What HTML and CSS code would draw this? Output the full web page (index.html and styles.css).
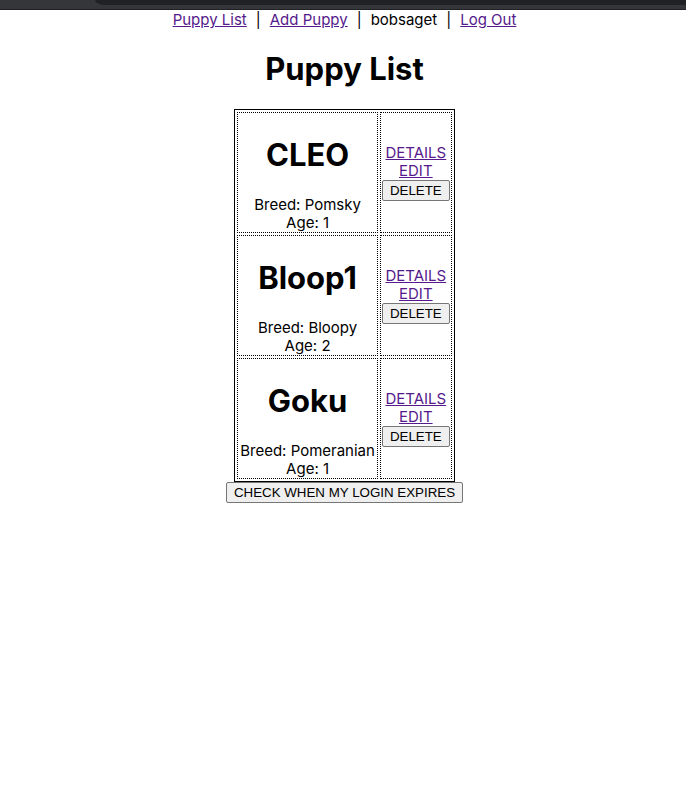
FILE: index.html
```html
<!DOCTYPE html>
<html lang="en">
<head>
<meta charset="utf-8">
<title>Puppy List</title>
<link rel="stylesheet" href="styles.css">
</head>
<body>
<div class="window-edge"><div class="window-field"></div></div>
<nav class="nav">
<a href="#list">Puppy List</a><span>|</span><a href="#add">Add Puppy</a><span>|</span><span>bobsaget</span><span>|</span><a href="#logout">Log Out</a>
</nav>
<main class="page">
<h1>Puppy List</h1>
<table class="puppies" id="list">
<tbody>
<tr>
<td class="puppy"><h1>CLEO</h1>Breed: Pomsky<br>Age: 1</td>
<td><a href="#cleo">DETAILS</a><br><a href="#edit-cleo">EDIT</a><br><button type="button">DELETE</button></td>
</tr>
<tr>
<td class="puppy"><h1>Bloop1</h1>Breed: Bloopy<br>Age: 2</td>
<td><a href="#bloop1">DETAILS</a><br><a href="#edit-bloop1">EDIT</a><br><button type="button">DELETE</button></td>
</tr>
<tr>
<td class="puppy"><h1>Goku</h1>Breed: Pomeranian<br>Age: 1</td>
<td><a href="#goku">DETAILS</a><br><a href="#edit-goku">EDIT</a><br><button type="button">DELETE</button></td>
</tr>
</tbody>
</table>
<button type="button">CHECK WHEN MY LOGIN EXPIRES</button>
</main>
</body>
</html>
```

FILE: styles.css
```css
body {
  margin: 0;
  background: #fff;
  color: #000;
  font-family: Inter, sans-serif;
  font-size: 15px;
  line-height: 18px;
  text-align: center;
}

a {
  color: #551a8b;
}

.window-edge {
  box-sizing: border-box;
  height: 10px;
  padding-left: 95px;
  border-bottom: 1px solid #202124;
  background: #35363a;
}

.window-field {
  height: 5px;
  background: #202124;
  border-bottom-left-radius: 10px 5px;
}

.nav {
  display: flex;
  justify-content: center;
  gap: 9px;
  padding: 1px 0 0 3px;
}

.page {
  display: flex;
  flex-direction: column;
  align-items: center;
  padding-left: 3px;
}

h1 {
  margin: 20px 0 21px;
  font-size: 31px;
  line-height: 39px;
}

.puppies {
  border: 1px solid #000;
  border-spacing: 2px;
}

.puppies td {
  padding: 1px;
  border: 1px dotted #000;
}

.puppies .puppy {
  padding: 2px 2px 0;
}

.puppy h1 {
  margin-bottom: 22px;
}

button {
  padding: 1px 7px;
  border: 1px solid #767676;
  border-radius: 2px;
  background: #efefef;
  color: #000;
  font-family: "Liberation Sans", Arial, sans-serif;
  line-height: 17px;
}
```
